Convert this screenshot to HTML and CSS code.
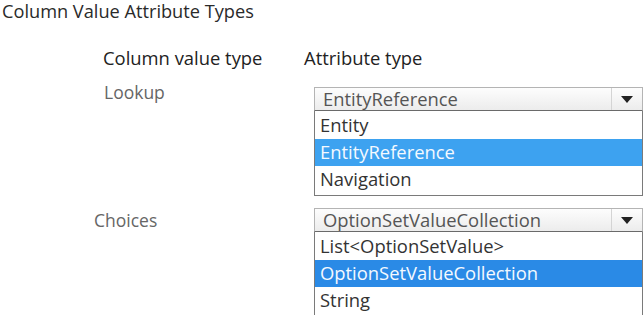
FILE: index.html
```html
<!DOCTYPE html>
<html lang="en">
<head>
    <meta charset="UTF-8">
    <meta name="viewport" content="width=device-width, initial-scale=1.0">
    <title>Column Value Attribute Types</title>
    <link rel="stylesheet" href="styles.css">
</head>
<body>
    <h1 class="title">Column Value Attribute Types</h1>

    <div class="types">
        <!-- Header -->
        <div class="row head">
            <div class="col-label">Column value type</div>
            <div class="col-attr">Attribute type</div>
        </div>

        <!-- Lookup -->
        <div class="row lookup">
            <div class="col-label name">Lookup</div>
            <div class="dropdown">
                <div class="select">
                    <span class="value">EntityReference</span>
                    <span class="button"><span class="arrow"></span></span>
                </div>
                <ul class="options">
                    <li>Entity</li>
                    <li class="selected">EntityReference</li>
                    <li>Navigation</li>
                </ul>
            </div>
        </div>

        <!-- Choices -->
        <div class="row choices">
            <div class="col-label name">Choices</div>
            <div class="dropdown">
                <div class="select">
                    <span class="value">OptionSetValueCollection</span>
                    <span class="button"><span class="arrow"></span></span>
                </div>
                <ul class="options">
                    <li>List&lt;OptionSetValue&gt;</li>
                    <li class="selected dark">OptionSetValueCollection</li>
                    <li>String</li>
                </ul>
            </div>
        </div>
    </div>

    <div class="rule"></div>
</body>
</html>
```

FILE: styles.css
```css
body {
    font-family: "Open Sans", "Noto Sans", sans-serif;
    background-color: #fff;
    color: #333;
    margin: 0;
    padding: 0;
    width: 644px;
    height: 315px;
    overflow: hidden;
}
.title {
    font-size: 18.2px;
    font-weight: normal;
    color: #2a2a2a;
    margin: 0;
    padding-left: 2px;
    line-height: 22px;
}
.types {
    display: flex;
    flex-direction: column;
}
.row {
    display: flex;
    align-items: flex-start;
}
.head {
    margin-top: 24px;
    font-size: 18.4px;
    line-height: 24px;
    color: #222;
}
.head .col-label {
    width: 201px;
    padding-left: 103px;
}
.lookup {
    margin-top: 11px;
}
.choices {
    margin-top: 12px;
}
.name {
    font-size: 17.5px;
    line-height: 22px;
    color: #666;
    width: 210px;
    padding-left: 104px;
}
.choices .name {
    line-height: 24px;
    padding-left: 94px;
    width: 220px;
}
.lookup .dropdown {
    margin-top: 6px;
}
.dropdown {
    width: 329px;
    font-size: 18.4px;
}
.select {
    display: flex;
    height: 22px;
    border: 1px solid #b4b4b4;
    border-bottom-color: #6a6a6a;
    background: linear-gradient(#fdfdfd, #ececec);
    color: #555;
}
.select .value {
    flex: 1;
    padding-left: 8px;
    line-height: 22px;
}
.select .button {
    width: 30px;
    border-left: 1px solid #d4d4d4;
    display: flex;
    align-items: center;
    justify-content: center;
}
.arrow {
    width: 0;
    height: 0;
    border-left: 6px solid transparent;
    border-right: 6px solid transparent;
    border-top: 7px solid #222;
}
.options {
    list-style: none;
    margin: 0;
    padding: 1px 0 2px;
    border: 1px solid #7a7a7a;
    border-top: none;
    background-color: #fff;
}
.options li {
    height: 27px;
    line-height: 26px;
    padding-left: 5px;
    color: #333;
}
.options li.selected {
    background-color: #3da2f0;
    color: #f4f9ff;
}
.options li.dark {
    background-color: #2a8ae6;
}
.rule {
    margin-top: 0;
    height: 2px;
    background-color: #999;
}
```
